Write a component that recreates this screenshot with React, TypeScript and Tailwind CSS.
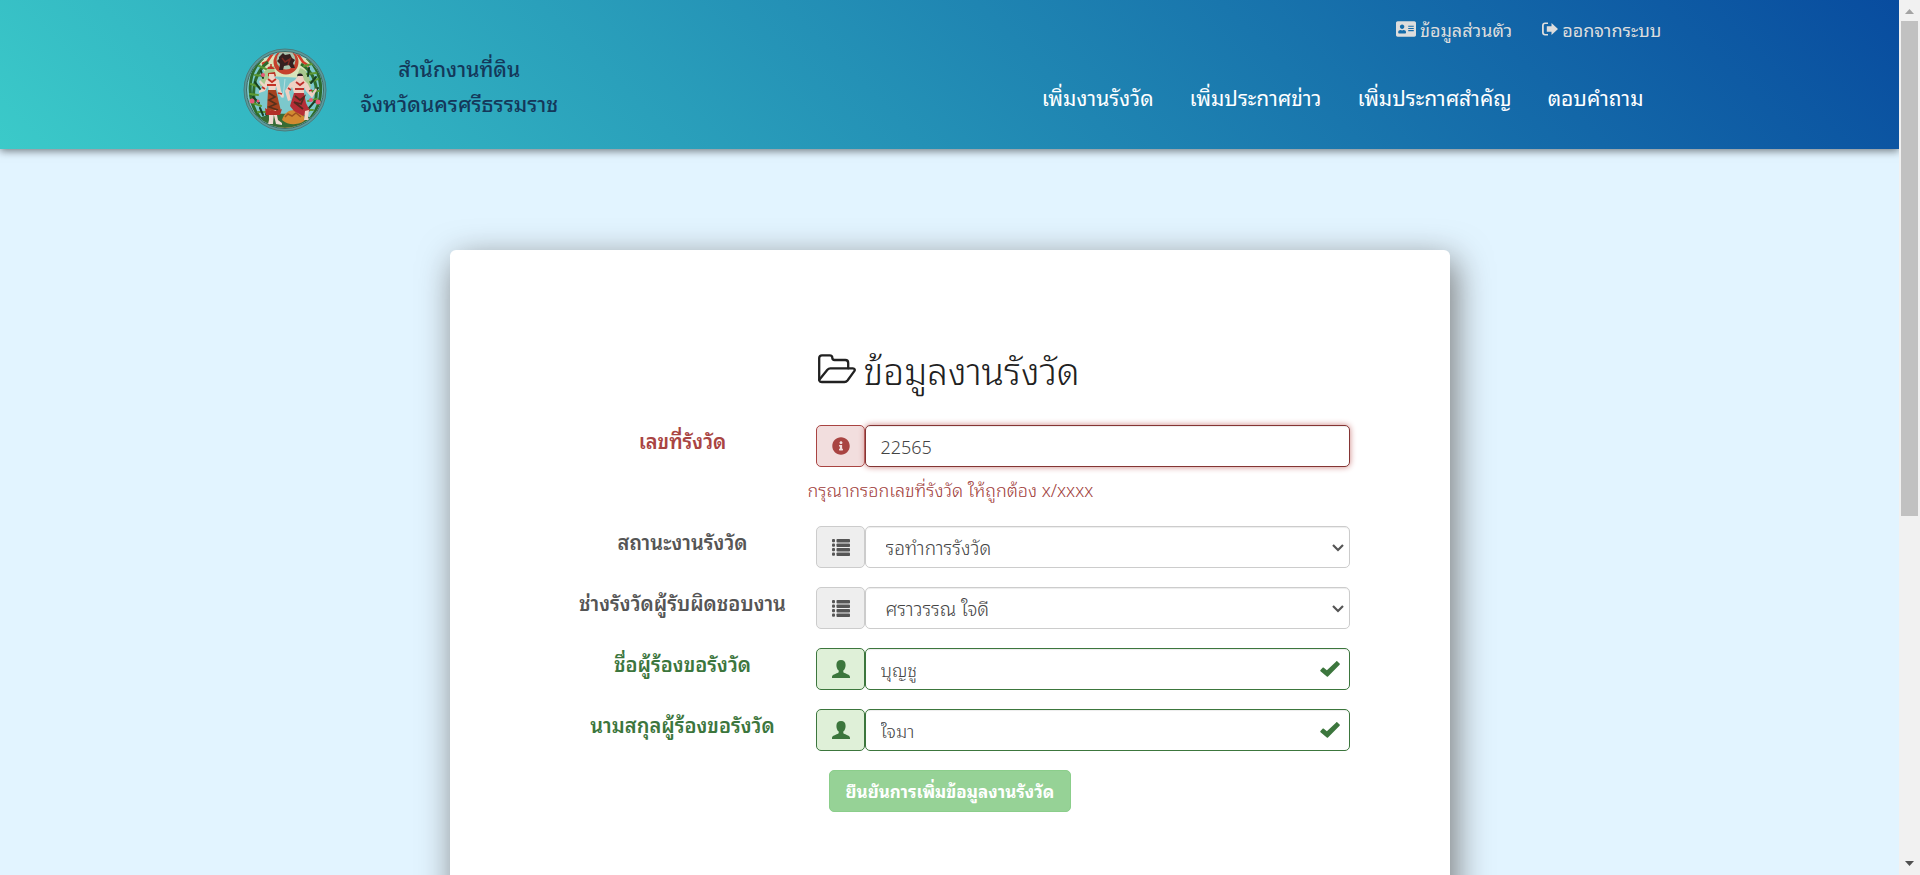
import type { ReactNode, SVGProps } from "react";
import { FaAddressCard, FaInfoCircle } from "react-icons/fa";

type Tone = "error" | "plain" | "ok";

const labelTone: Record<Tone, string> = {
  error: "text-[#a94442]",
  plain: "text-[#555555]",
  ok: "text-[#3c763d]",
};

const addonTone: Record<Tone, string> = {
  error: "border-[#a94442] bg-[#f2dede] text-[#a94442]",
  plain: "border-[#cccccc] bg-[#eeeeee] text-[#555555]",
  ok: "border-[#3c763d] bg-[#dff0d8] text-[#3c763d]",
};

const controlTone: Record<Tone, string> = {
  error: "border-[#843534] shadow-[inset_0_1px_1px_rgba(0,0,0,0.075),0_0_6px_#ce8483]",
  plain: "border-[#cccccc] shadow-[inset_0_1px_1px_rgba(0,0,0,0.075)]",
  ok: "border-[#3c763d] shadow-[inset_0_1px_1px_rgba(0,0,0,0.075)]",
};

const control =
  "h-full w-full rounded-[5px] border bg-white font-light text-[#444444] outline-none";

function SignOutIcon(props: SVGProps<SVGSVGElement>) {
  return (
    <svg viewBox="0 0 16 14" fill="currentColor" aria-hidden="true" {...props}>
      <path d="M6 .5v1.600H3.200c-.8 0-1.400.6-1.400 1.400v7c0 .8.600 1.400 1.400 1.400H6v1.600H3c-1.700 0-3-1.300-3-3v-7c0-1.700 1.300-3 3-3z" />
      <path d="M9.500 1 16 7l-6.500 6V9.800H4.800V4.200h4.700z" />
    </svg>
  );
}

function FolderOpenIcon(props: SVGProps<SVGSVGElement>) {
  return (
    <svg
      viewBox="0 0 38 30"
      fill="none"
      stroke="currentColor"
      strokeWidth="2.300"
      strokeLinejoin="round"
      strokeLinecap="round"
      aria-hidden="true"
      {...props}
    >
      <path d="M1.200 26V4c0-1.700 1-2.700 2.700-2.700h7.800c1.700 0 2.600.9 2.600 2.500 0 1.500.9 2.200 2.300 2.200h10.700c1.800 0 2.900 1.100 2.900 2.900v5.400" />
      <path d="M1.300 25.800C1.500 27.300 2.500 28 4 28h22.500c1.300 0 2.200-.5 3-1.500l6.800-9.400c.9-1.300.4-2.700-1.400-2.700H12.300c-1.200 0-2.100.5-2.900 1.400z" />
    </svg>
  );
}

function ListIcon() {
  return (
    <svg viewBox="0 0 18 17" className="h-[17px] w-[18px]" fill="currentColor" aria-hidden="true">
      {[0, 4.5, 9, 13.5].map((y) => (
        <g key={y}>
          <rect x="0" y={y} width="3" height="3.300" rx="1" />
          <rect x="4.500" y={y} width="13.500" height="3.500" rx="0.800" />
        </g>
      ))}
    </svg>
  );
}

function UserIcon() {
  return (
    <svg viewBox="0 0 18 18" className="size-[18px]" fill="currentColor" aria-hidden="true">
      <path d="M9 0c2.900 0 4.600 1.900 4.600 4.900 0 2.300-.9 4.500-2.300 5.700v1.200c0 .7.500 1 1.200 1.300 2.300 1 5.500 1.900 5.500 3.900v1H0v-1c0-2 3.200-2.900 5.500-3.900.7-.3 1.200-.6 1.200-1.300v-1.200C5.300 9.400 4.400 7.200 4.400 4.900 4.400 1.900 6.100 0 9 0z" />
    </svg>
  );
}

function CheckIcon(props: SVGProps<SVGSVGElement>) {
  return (
    <svg viewBox="0 0 20 16" fill="currentColor" aria-hidden="true" {...props}>
      <path d="M16.200.4c.4-.4.900-.4 1.200 0l2.200 2.200c.4.400.4.800 0 1.200L8 15.500c-.4.400-.9.400-1.200 0L.5 10.200c-.4-.4-.4-.8 0-1.200l2.100-2.200c.4-.4.800-.4 1.200 0l3.100 2.400z" />
    </svg>
  );
}

function Seal() {
  return (
    <svg viewBox="0 0 84 84" className="size-[84px]" role="img" aria-label="ตราสำนักงานที่ดิน">
      <defs>
        <clipPath id="seal-face">
          <circle cx="42" cy="42" r="38" />
        </clipPath>
      </defs>
      <circle cx="42" cy="42" r="41" fill="#5b9a9b" stroke="#4d7b7b" strokeWidth="1" />
      <circle cx="42" cy="42" r="38.500" fill="#7cc8cc" stroke="#3f6a66" strokeWidth="1" />
      <g clipPath="url(#seal-face)">
        <path d="M16 14C26 4 58 4 68 14L60 30 24 28z" fill="#d9e4bb" />
        <path d="M30 5 24 14l-5 2M54 5l6 9 6 4" stroke="#d33c2a" strokeWidth="2.500" fill="none" />
        <path d="M31 18c-10 2-13 9-14 20h9l6-12zM57 20c8 2 10 9 11 20h-6l-8-12z" fill="#a9c98f" />
        <g fill="none" stroke="#2d6b2c" strokeWidth="3">
          <path d="M20 10C4 24 3 52 17 70" />
          <path d="M25 14c-12 9-17 25-13 43" />
          <path d="M64 10c17 14 18 42 4 60" />
          <path d="M58 16c13 8 18 22 14 39" />
        </g>
        <g stroke="#5d9a34" strokeWidth="2" strokeLinecap="round">
          <path d="m16 18 7 3M12 27l8 1M8 36l8 3M7 46l8 1M10 55l8 3M15 64l9 0M20 71l8-3" />
          <path d="m61 18 8-2M64 26l9-1M67 34l8-3M67 43l9 0M65 53l9-2M62 62l8 0M57 68l7 4" />
        </g>
        <g stroke="#183f21" strokeWidth="2" strokeLinecap="round">
          <path d="m18 23 2 7M12 34l5 7M10 49l6 6M17 60l3 7M27 73l-4-7" />
          <path d="m66 20-1 8M73 29l-5 6M75 40l-6 6M72 53l-6 7M64 62l-3 8" />
        </g>
        <path d="M13 71c14-7 45-7 58 0L60 82H24z" fill="#376c35" />
        <path d="M23 76c13 5 27 5 38-1l-5 7H28z" fill="#d67a31" />
        <path d="M39 72c2-7 7-10 12-10s10 4 11 10c-4 5-17 6-23 0z" fill="#d28a31" />
        <path d="m42 69 3-3 4 2 4-3 5 4" stroke="#a0521f" strokeWidth="1.500" fill="none" />
        <circle cx="43" cy="14" r="12.500" fill="#c5402c" />
        <circle cx="43" cy="12" r="9.500" fill="#a9c4ae" />
        <path d="M36 9l4-4 2 2 5-1 2 4 3 2-2 3 2 5h-4l-2-3-5 1-1 4h-4l1-6-3-3 2-2z" fill="#35201f" />
        <path d="m39 10 3 4 5-3-2 6" stroke="#7d2b23" strokeWidth="1.500" fill="none" />
        <path d="m40 50 2-19" stroke="#b6dfe0" strokeWidth="1" />
        <g>
          <path d="M24 21h8l-2-2-2-1-3 1zM25 25l7-1 1 4-4 2-4-2z" fill="#bc3325" />
          <path d="m28 19 0-3" stroke="#bc3325" strokeWidth="1.500" />
          <path d="M26 26h5l1 4 4 2 2 11 3 5-2 2-4-5-2-7-1 6h-6l-1-7-3 6-6 2v-2l4-3 3-8 3-2z" fill="#efd6c8" />
          <path d="m17 32 5 5-1 3-5-6z" fill="#efd6c8" />
          <path d="m25 31 4 3 4-3M24 37h9M19 39l3 2M35 45l4 1" stroke="#c33226" strokeWidth="1.800" fill="none" />
          <path d="M25 42h8l3 13 2 8-6 2-8-3z" fill="#a5411e" />
          <path d="m26 45 6 4-6 3 7 4-7 3 9 3" stroke="#57311b" strokeWidth="1.600" fill="none" />
          <path d="M26 62v10l-1 4h5l1-12M33 62l2 10 4 3v2l-6-1-3-13" fill="#efd9cf" />
          <path d="M22 60c4 3 12 4 17 1l-2 6H23z" fill="#b22f26" />
        </g>
        <g>
          <path d="M54 27c3-3 7-1 6 3l-3 3z" fill="#2c2428" />
          <path d="M55 28h5l1 4 4 4 4 9 4-5 1 2-5 8-6-7-2-4v6H51l-2-6-3 5 2 8-3 1-3-10 5-8 5-3z" fill="#efd0c3" />
          <path d="m53 34 4 3 4-3M45 40l3 2M52 41h9M66 43l3-1" stroke="#bc302c" strokeWidth="1.800" fill="none" />
          <path d="M51 45h10l2 10 4 8-7 5-9-5-4-5z" fill="#b42e36" />
          <path d="m52 48 5 4 4-3-3 7-7-2 9 7" stroke="#542b20" strokeWidth="1.800" fill="none" />
          <path d="m62 63-1 9h6l-2-2 1-8" fill="#efd4c7" />
        </g>
        <g fill="#e75978">
          <circle cx="9" cy="53" r="2.500" />
          <circle cx="15" cy="53" r="1.500" />
          <circle cx="68" cy="52" r="2" />
          <circle cx="75" cy="54" r="2.500" />
          <circle cx="20" cy="27" r="2" />
        </g>
      </g>
    </svg>
  );
}

function Field({
  id,
  label,
  tone,
  icon,
  help,
  children,
}: {
  id: string;
  label: string;
  tone: Tone;
  icon: ReactNode;
  help?: string;
  children: ReactNode;
}) {
  return (
    <div className="grid grid-cols-[250px_1fr]">
      <label
        htmlFor={id}
        className={`text-center text-[20px] leading-[30px] font-semibold ${labelTone[tone]}`}
      >
        {label}
      </label>
      <div>
        <div className="flex h-[42px] pl-2">
          <span
            className={`flex w-[49px] shrink-0 items-center justify-center rounded-[5px] border pl-0.5 ${addonTone[tone]}`}
          >
            {icon}
          </span>
          <div className="relative flex-1">{children}</div>
        </div>
        {help && (
          <p id={`${id}-help`} className="mt-2 h-8 text-[18px] leading-7 font-light text-[#a03b39]">
            {help}
          </p>
        )}
      </div>
    </div>
  );
}

function TextField({ id, label, value }: { id: string; label: string; value: string }) {
  return (
    <Field id={id} label={label} tone="ok" icon={<UserIcon />}>
      <input
        id={id}
        type="text"
        defaultValue={value}
        className={`${control} px-[15px] text-[18px] ${controlTone.ok}`}
      />
      <CheckIcon className="pointer-events-none absolute top-[13px] right-2.5 h-4 w-5 text-[#3c763d]" />
    </Field>
  );
}

function SelectField({ id, label, value }: { id: string; label: string; value: string }) {
  return (
    <Field id={id} label={label} tone="plain" icon={<ListIcon />}>
      <select
        id={id}
        className={`${control} appearance-none px-5 text-[19px] ${controlTone.plain}`}
      >
        <option>{value}</option>
      </select>
      <svg
        viewBox="0 0 12 8"
        className="pointer-events-none absolute top-[18px] right-1.5 h-2 w-3 text-[#555555]"
        fill="none"
        stroke="currentColor"
        strokeWidth="2.200"
        aria-hidden="true"
      >
        <path d="m1 1 5 5 5-5" />
      </svg>
    </Field>
  );
}

const navigation = ["เพิ่มงานรังวัด", "เพิ่มประกาศข่าว", "เพิ่มประกาศสำคัญ", "ตอบคำถาม"];

function Header() {
  return (
    <header className="relative h-[149px] bg-[linear-gradient(45deg,#3bcac9,#084c9f)] shadow-[0_2px_8px_rgba(0,0,0,0.5)]">
      <div className="mx-auto flex h-full max-w-[1424px] justify-between">
        <div className="flex items-start gap-[34px] pl-[5px] pt-12">
          <Seal />
          <p className="pt-0.5 text-center text-[21px] leading-[35px] font-medium text-[#14385a]">
            สำนักงานที่ดิน
            <br />
            จังหวัดนครศรีธรรมราช
          </p>
        </div>
        <div className="flex flex-col items-end">
          <div className="flex gap-[30px] pt-[15px] text-[18px] leading-7 text-[#dddddd]">
            <a href="#profile" className="flex items-center gap-1">
              <FaAddressCard className="size-5" />
              ข้อมูลส่วนตัว
            </a>
            <a href="#logout" className="flex items-center gap-1">
              <SignOutIcon className="h-3.5 w-4" />
              ออกจากระบบ
            </a>
          </div>
          <nav className="flex gap-9 pt-10 pr-[18px] text-[21px] leading-7 text-white">
            {navigation.map((item) => (
              <a key={item} href="#menu">
                {item}
              </a>
            ))}
          </nav>
        </div>
      </div>
    </header>
  );
}

function ScrollRail() {
  return (
    <div className="flex w-[21px] shrink-0 flex-col items-center bg-[#f1f1f1]" aria-hidden="true">
      <svg viewBox="0 0 9 5" className="mt-[9px] h-[5px] w-[9px]">
        <path d="M0 5 4.500 0 9 5z" fill="#a3a3a3" />
      </svg>
      <div className="mt-[7px] h-[495px] w-[17px] bg-[#c1c1c1]" />
      <svg viewBox="0 0 9 5" className="mt-auto mb-[9px] h-[5px] w-[9px]">
        <path d="M0 0 4.500 5 9 0z" fill="#505050" />
      </svg>
    </div>
  );
}

export default function App() {
  return (
    <div className="flex h-screen overflow-hidden bg-[#e2f4ff] font-['Noto_Sans_Thai_Looped','Noto_Sans_Thai','Noto_Sans',sans-serif]">
      <div className="min-w-0 flex-1 overflow-hidden">
        <Header />
        <main className="pt-[101px]">
          <form
            className="mx-auto min-h-screen max-w-[1000px] rounded-md bg-white pt-[91px] pr-[100px] pl-[108px] shadow-[5px_10px_35px_#777777]"
            onSubmit={(event) => event.preventDefault()}
          >
            <h1 className="mb-7 flex h-14 items-center gap-2 pl-[260px] text-[37px] leading-[56px] font-light text-[#212121]">
              <FolderOpenIcon className="h-[30px] w-[38px] shrink-0" />
              ข้อมูลงานรังวัด
            </h1>
            <div className="flex flex-col gap-[19px]">
              <Field
                id="survey-number"
                label="เลขที่รังวัด"
                tone="error"
                icon={<FaInfoCircle className="size-[18px]" />}
                help="กรุณากรอกเลขที่รังวัด ให้ถูกต้อง x/xxxx"
              >
                <input
                  id="survey-number"
                  type="text"
                  defaultValue="22565"
                  aria-invalid="true"
                  aria-describedby="survey-number-help"
                  className={`${control} px-[15px] text-[18px] ${controlTone.error}`}
                />
              </Field>
              <SelectField id="status" label="สถานะงานรังวัด" value="รอทำการรังวัด" />
              <SelectField id="surveyor" label="ช่างรังวัดผู้รับผิดชอบงาน" value="ศราวรรณ ใจดี" />
              <TextField id="first-name" label="ชื่อผู้ร้องขอรังวัด" value="บุญชู" />
              <TextField id="last-name" label="นามสกุลผู้ร้องขอรังวัด" value="ใจมา" />
              <button
                type="submit"
                className="ml-[271px] h-[42px] self-start rounded-[5px] border border-[#8bce8b] bg-[#96d296] px-4 text-[17px] font-bold text-white"
              >
                ยืนยันการเพิ่มข้อมูลงานรังวัด
              </button>
            </div>
          </form>
        </main>
      </div>
      <ScrollRail />
    </div>
  );
}
